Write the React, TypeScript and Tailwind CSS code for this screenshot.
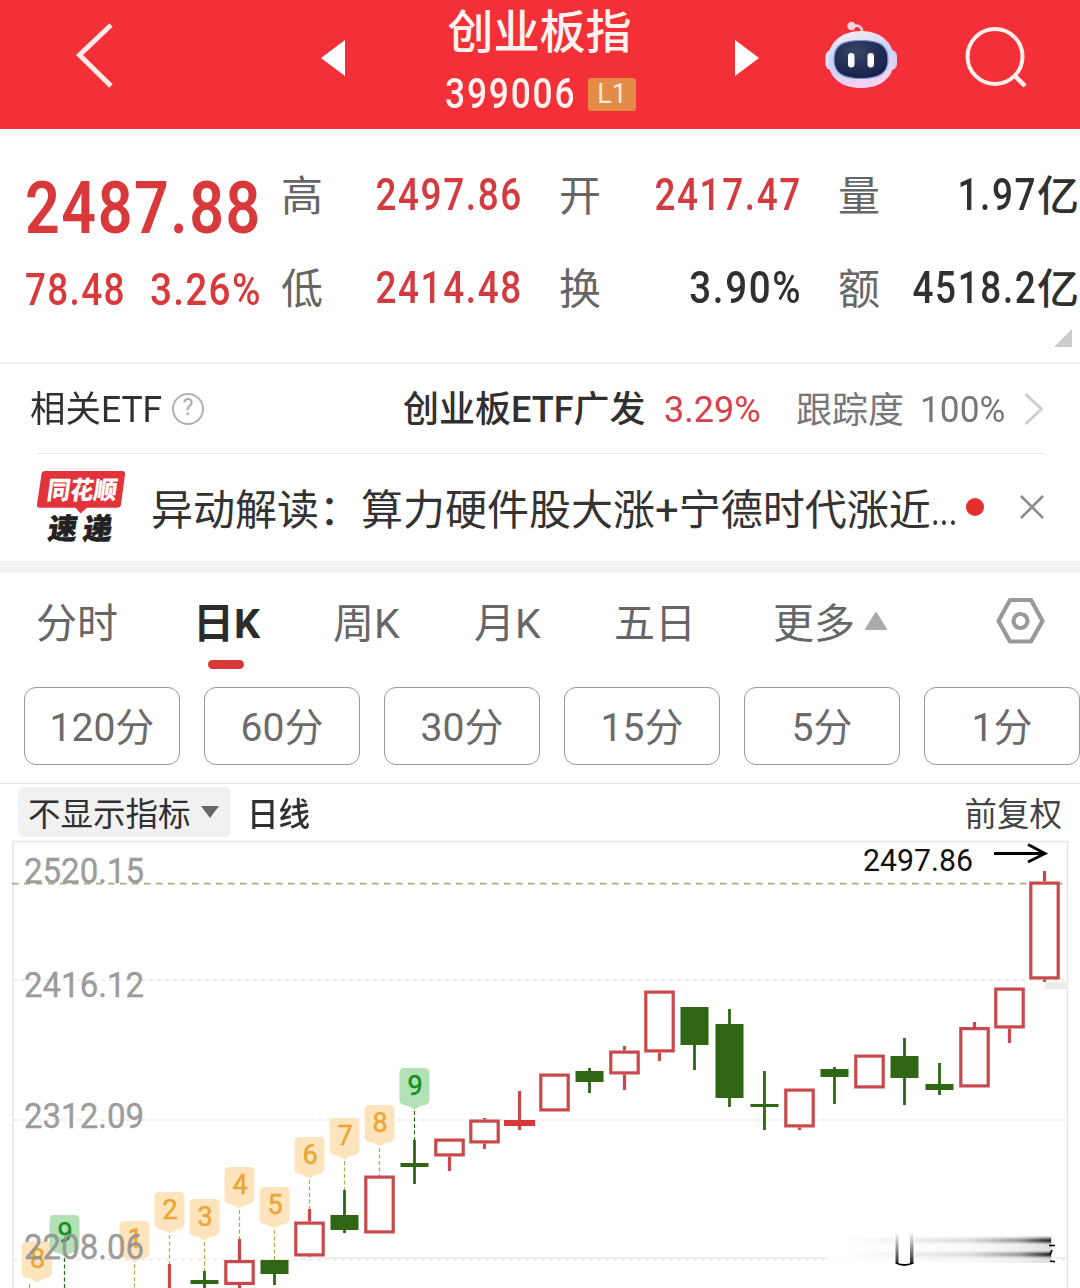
import { clsx } from 'clsx';

const RED = '#c9494b';
const GREEN = '#2f6614';

type Candle = {
  x: number;
  kind: 'up' | 'down' | 'flat';
  top: number;
  bottom: number;
  high?: number;
  low?: number;
};

const candles: Candle[] = [
  { x: 169.5, kind: 'up', top: 1300, bottom: 1310, high: 1264 },
  { x: 204.5, kind: 'down', top: 1280, bottom: 1284, high: 1271, low: 1290 },
  { x: 239.5, kind: 'up', top: 1260, bottom: 1285, high: 1239, low: 1290 },
  { x: 274.5, kind: 'down', top: 1260, bottom: 1274, low: 1285 },
  { x: 309.5, kind: 'up', top: 1221.5, bottom: 1256.5, high: 1209, low: 1257 },
  { x: 344.5, kind: 'down', top: 1215, bottom: 1230, high: 1190, low: 1233 },
  { x: 379.5, kind: 'up', top: 1175.5, bottom: 1233.5 },
  { x: 414.5, kind: 'down', top: 1163, bottom: 1167, high: 1140, low: 1184 },
  { x: 449.5, kind: 'up', top: 1138.5, bottom: 1156.5, low: 1171 },
  { x: 484.5, kind: 'up', top: 1119.5, bottom: 1143.5, high: 1118, low: 1149 },
  { x: 519.5, kind: 'flat', top: 1120, bottom: 1126, high: 1091, low: 1130 },
  { x: 554.5, kind: 'up', top: 1073.5, bottom: 1111.5 },
  { x: 589.5, kind: 'down', top: 1071, bottom: 1082, high: 1068, low: 1093 },
  { x: 624.5, kind: 'up', top: 1050.5, bottom: 1074.5, high: 1046, low: 1090 },
  { x: 659.5, kind: 'up', top: 990.5, bottom: 1052.5, low: 1061 },
  { x: 694.5, kind: 'down', top: 1007, bottom: 1045, low: 1070 },
  { x: 729.5, kind: 'down', top: 1024, bottom: 1098, high: 1009, low: 1107 },
  { x: 764.5, kind: 'down', top: 1104, bottom: 1107, high: 1071, low: 1130 },
  { x: 799.5, kind: 'up', top: 1088.5, bottom: 1127.5, low: 1130 },
  { x: 834.5, kind: 'down', top: 1069, bottom: 1077, high: 1067, low: 1104 },
  { x: 869.5, kind: 'up', top: 1054.5, bottom: 1088.5 },
  { x: 904.5, kind: 'down', top: 1056, bottom: 1078, high: 1038, low: 1105 },
  { x: 939.5, kind: 'down', top: 1084, bottom: 1090, high: 1063, low: 1095 },
  { x: 974.5, kind: 'up', top: 1027, bottom: 1087.5, high: 1022 },
  { x: 1009.5, kind: 'up', top: 987.5, bottom: 1028.5, low: 1043 },
  { x: 1044.5, kind: 'up', top: 881.5, bottom: 979.5, high: 871, low: 982 },
];

// y = top of the tag, end = where its dashed leader stops
const tags = [
  { n: '8', x: 37, y: 1241, end: 1290 },
  { n: '9', x: 64.5, y: 1215, end: 1290 },
  { n: '1', x: 134.5, y: 1221, end: 1290 },
  { n: '2', x: 169.5, y: 1192, end: 1264 },
  { n: '3', x: 204.5, y: 1199, end: 1271 },
  { n: '4', x: 239.5, y: 1167, end: 1239 },
  { n: '5', x: 274.5, y: 1187, end: 1260 },
  { n: '6', x: 309.5, y: 1137, end: 1209 },
  { n: '7', x: 344.5, y: 1118, end: 1190 },
  { n: '8', x: 379.5, y: 1105, end: 1176 },
  { n: '9', x: 414.5, y: 1068, end: 1140 },
];

const axis = [
  { label: '2520.15', y: 883 },
  { label: '2416.12', y: 997 },
  { label: '2312.09', y: 1128 },
  { label: '2208.06', y: 1259 },
];

function CandleMark({ x, kind, top, bottom, high, low }: Candle) {
  if (kind === 'down') {
    return (
      <g fill={GREEN}>
        <rect x={x - 1.4} y={high ?? top} width={2.8} height={(low ?? bottom) - (high ?? top)} />
        <rect x={x - 14} y={top} width={28} height={bottom - top} />
      </g>
    );
  }
  if (kind === 'flat') {
    return (
      <g fill="#d8383a">
        <rect x={x - 1.6} y={high} width={3.2} height={low! - high!} fill={RED} />
        <rect x={x - 15.5} y={top} width={31} height={bottom - top} />
      </g>
    );
  }
  return (
    <g fill={RED}>
      {high && <rect x={x - 1.6} y={high} width={3.2} height={top - high} />}
      {low && <rect x={x - 1.6} y={bottom} width={3.2} height={low - bottom} />}
      <rect x={x - 13.7} y={top + 1.6} width={27.4} height={bottom - top - 3.2} fill="#fff" stroke={RED} strokeWidth={3.2} />
    </g>
  );
}

function Tag({ n, x, y, end }: (typeof tags)[number]) {
  const green = n === '9';
  const lineX = x === 37 ? 29.5 : x;
  return (
    <g>
      <line x1={lineX} x2={lineX} y1={y + 43} y2={end} stroke={green ? '#2f6614' : '#a9ab4c'} strokeWidth={1.2} strokeDasharray="4 2.5" />
      <path
        d={`M${x - 10} ${y}h20q5 0 5 5v26q0 4-3 5.500l-7 2l-5 3l-5-3l-7-2q-3-1.500-3-5.500v-26q0-5 5-5z`}
        fill={green ? '#b3e0b5' : '#fde4bd'}
      />
      <text x={x + 0.5} y={y + 26.5} textAnchor="middle" fontSize={27} stroke={green ? '#12901c' : '#eaa736'} strokeWidth={0.5} fill={green ? '#12901c' : '#eaa736'}>
        {n}
      </text>
    </g>
  );
}

function Chart() {
  return (
    <svg className="block h-[448px] w-[1080px]" viewBox="0 840 1080 448" fontFamily="Roboto, sans-serif">
      <defs>
        <linearGradient id="streak">
          <stop offset="0" stopColor="#000" stopOpacity="0" />
          <stop offset="0.6" stopColor="#000" stopOpacity="0.13" />
          <stop offset="0.85" stopColor="#000" stopOpacity="0.4" />
          <stop offset="1" stopColor="#000" stopOpacity="0.9" />
        </linearGradient>
        <linearGradient id="drip" x1="0" y1="0" x2="0" y2="1">
          <stop offset="0" stopColor="#000" stopOpacity="0" />
          <stop offset="1" stopColor="#000" stopOpacity="0.85" />
        </linearGradient>
        <filter id="soft" x="-5%" y="-50%" width="110%" height="200%">
          <feGaussianBlur stdDeviation="0.4 1.3" />
        </filter>
      </defs>

      {/* frame and grid */}
      <path d="M13 1288V841.500H1067.500V1288" fill="none" stroke="#e6e6e6" strokeWidth={1.6} />
      <g stroke="#e6e6e6" strokeWidth={1.4} strokeDasharray="4 4">
        <line x1="13" x2="1067" y1="980" y2="980" />
        <line x1="13" x2="1067" y1="1120" y2="1120" />
        <line x1="13" x2="1067" y1="1259.500" y2="1259.500" />
      </g>
      <line x1="300" x2="1067" y1="1257.800" y2="1257.800" stroke="#ececec" strokeWidth={1.4} />
      <line x1="12" x2="1067" y1="883.700" y2="883.700" stroke="#b3a97a" strokeWidth={1.8} strokeDasharray="6.500 5.500" />
      <rect x="1045" y="982" width="23" height="7" fill="#ececec" />

      {tags.map((t) => (
        <Tag key={t.x} {...t} />
      ))}
      {candles.map((c) => (
        <CandleMark key={c.x} {...c} />
      ))}

      {axis.map((a) => (
        <text key={a.label} x="24" y={a.y} fontSize={35} fill="#8f8f8f" fillOpacity={0.9} stroke="#999" strokeWidth={0.4} textLength={120} lengthAdjust="spacingAndGlyphs">
          {a.label}
        </text>
      ))}

      <text x="863" y="871" fontSize={31} fill="#111" textLength={110} lengthAdjust="spacingAndGlyphs">
        2497.86
      </text>
      <path d="M994 853.500H1044M1028 844.500L1045 853.500L1028 862" fill="none" stroke="#000" strokeWidth={2.8} />

      {/* worn-off watermark */}
      <rect x="828" y="1236" width="228" height="28" fill="#fff" opacity={0.8} />
      <rect x="828" y="1236" width="224" height="27" fill="url(#streak)" opacity={0.15} />
      <g filter="url(#soft)">
        <rect x="850" y="1238.500" width="201" height="4" fill="url(#streak)" />
        <rect x="850" y="1252.500" width="201" height="4" fill="url(#streak)" />
      </g>
      <rect x="894" y="1234" width="21" height="31" fill="#fff" />
      <rect x="895.500" y="1232" width="3" height="32" fill="url(#drip)" />
      <rect x="910" y="1232" width="3.500" height="32" fill="url(#drip)" />
      <path d="M896 1263q8 4 17 0" fill="none" stroke="#000" strokeWidth={1.8} />
      <path d="M1049 1245.500h6M1052 1250l-2 5M1050 1261l5 .8" fill="none" stroke="#000" strokeWidth={1.6} />
    </svg>
  );
}

function Robot() {
  return (
    <svg className="h-[68px] w-[74px]" viewBox="824 21 74 68">
      <defs>
        <linearGradient id="shell" x1="0" y1="0" x2="0.3" y2="1">
          <stop offset="0" stopColor="#fff1f3" />
          <stop offset="0.5" stopColor="#c9d4f6" />
          <stop offset="1" stopColor="#f3d3f2" />
        </linearGradient>
        <radialGradient id="visor" cx="0.4" cy="0.3" r="0.7">
          <stop offset="0" stopColor="#3a4566" />
          <stop offset="1" stopColor="#17204a" />
        </radialGradient>
      </defs>
      <path d="M852 26q11-2 10 7" fill="none" stroke="#f8c9d4" strokeWidth={2.6} />
      <circle cx="851.500" cy="26" r="4.200" fill="#fbd3da" />
      <rect x="825.500" y="50" width="12" height="20" rx="6" fill="#f3e4f5" />
      <rect x="885" y="50" width="12" height="20" rx="6" fill="#d9cdf8" />
      <path d="M861 31c20 0 33 12 33 29c0 18-14 28-33 28s-33-10-33-28c0-17 13-29 33-29z" fill="url(#shell)" />
      <path d="M861 40.500c18 0 27 4 27 19c0 14-9 19-27 19s-27-5-27-19c0-15 9-19 27-19z" fill="url(#visor)" stroke="#7d92dd" strokeWidth={1.2} />
      <rect x="848" y="53" width="6.500" height="14.500" rx="3.200" fill="#fff" />
      <rect x="867.500" y="53" width="6.500" height="14.500" rx="3.200" fill="#fff" />
    </svg>
  );
}

function Header() {
  return (
    <header className="flex h-[129px] items-start bg-[#f32f38] text-[#fff3f0]">
      <svg className="mt-[22px] ml-[75px] h-[68px] w-10" viewBox="75 22 40 68">
        <path d="M111 25L79.500 55L111 86" fill="none" stroke="#ffebe6" strokeWidth={5} />
      </svg>
      <svg className="mt-10 ml-[206px] h-9 w-6" viewBox="0 0 24 36">
        <path d="M24 0V36L0 18z" fill="#fff" />
      </svg>
      <div className="ml-[95px] flex w-[200px] flex-col items-center">
        <h1 className="mt-[5px] -ml-px text-[46px] leading-[54px] font-medium whitespace-nowrap">创业板指</h1>
        <div className="mt-[14px] flex h-[42px] w-[200px] items-center pl-[5px]">
          <span className="w-[143px] shrink-0 text-[42px] leading-[42px] font-medium">
            <span className="inline-block origin-left scale-x-[0.84] tracking-[2.2px]">399006</span>
          </span>
          <span className="flex h-[33px] w-12 items-center justify-center rounded-[3px] bg-[#e28c47] text-[27px] text-[#ffe9d6]">L1</span>
        </div>
      </div>
      <svg className="mt-10 ml-[95px] h-9 w-6" viewBox="0 0 24 36">
        <path d="M0 0V36L24 18z" fill="#fff" />
      </svg>
      <div className="mt-[21px] ml-[65px]">
        <Robot />
      </div>
      <svg className="mt-[25px] ml-[66px] h-16 w-[66px]" viewBox="964 25 66 64">
        <circle cx="995" cy="56.500" r="27.500" fill="none" stroke="#fff0ec" strokeWidth={4} />
        <path d="M1014 75L1025 86" stroke="#fff0ec" strokeWidth={4.500} />
      </svg>
    </header>
  );
}

const quotes = [
  [
    { label: '高', value: '2497.86', red: true },
    { label: '低', value: '2414.48', red: true },
  ],
  [
    { label: '开', value: '2417.47', red: true },
    { label: '换', value: '3.90%', red: false },
  ],
  [
    { label: '量', value: '1.97', unit: '亿', red: false },
    { label: '额', value: '4518.2', unit: '亿', red: false },
  ],
];

function Quotes() {
  return (
    <section className="flex h-[233px] pl-[25px]">
      <div className="w-[256px] shrink-0 pt-10 font-medium text-[#d8393b]">
        <div className="h-[76px] text-[73px] leading-[78px]">
          <span className="inline-block origin-left scale-x-[0.835] font-semibold tracking-[1.8px]">2487.88</span>
        </div>
        <div className="mt-[22px] flex h-[46px] text-[45px] leading-[46px]">
          <span className="w-[125px]">
            <span className="inline-block origin-left scale-x-[0.82] tracking-[1.6px]">78.48</span>
          </span>
          <span className="inline-block origin-left scale-x-[0.86] tracking-[1.5px]">3.26%</span>
        </div>
      </div>
      {quotes.map((col, i) => (
        <div key={i} className={clsx('shrink-0 pt-[43px]', i === 0 && 'w-[278px]', i === 1 && 'w-[279px]', i === 2 && 'w-[241px]')}>
          {col.map((q) => (
            <div key={q.label} className="mb-[47px] flex h-[46px] items-center leading-[46px]">
              <span className="pt-1 text-[42px] text-[#666]">{q.label}</span>
              <span
                className={clsx(
                  'flex flex-1 items-center justify-end text-[45px] font-medium',
                  i < 2 && 'pr-[36px]',
                  q.red ? 'text-[#d23c40]' : 'text-[#303030]',
                )}
              >
                <span className={clsx('inline-block origin-right tracking-[2px]', q.value.endsWith('%') ? 'scale-x-[0.855]' : 'scale-x-[0.82]')}>{q.value}</span>
                {'unit' in q && <span className="pt-[3px] text-[42px]">{q.unit}</span>}
              </span>
            </div>
          ))}
          {i === 2 && (
            <svg className="-mt-[29px] ml-[216px] h-[18px] w-[18px]" viewBox="0 0 18 18">
              <path d="M18 0V18H0z" fill="#ccc" />
            </svg>
          )}
        </div>
      ))}
    </section>
  );
}

function EtfRow() {
  return (
    <section className="flex h-[91px] items-center border-t-2 border-[#efefef] pl-[30px] text-[36px] whitespace-nowrap text-[#303030]">
      <span className="w-[142px] pt-[3px]">
        <span className="inline-block origin-left scale-x-[0.985]">相关ETF</span>
      </span>
      <span className="flex h-[32px] w-[32px] items-center justify-center rounded-full border-2 border-[#b0b0b0] text-[23px] text-[#aaa]">?</span>
      <span className="ml-[199px] w-[261px] pt-[3px] font-medium">创业板ETF广发</span>
      <span className="w-[132px] pt-[3px] text-[#d5414f]">3.29%</span>
      <span className="w-[124px] pt-1 text-[#777]">跟踪度</span>
      <span className="w-[104px] pt-[3px] text-[#777]">
        <span className="inline-block origin-left scale-x-[0.98]">100%</span>
      </span>
      <svg className="h-8 w-5" viewBox="0 0 20 32">
        <path d="M1.500 1L17.500 16L1.500 31" fill="none" stroke="#ccc" strokeWidth={2.800} />
      </svg>
    </section>
  );
}

function NewsRow() {
  return (
    <section className="flex h-[108px] items-center">
      <div className="ml-[37px] h-[76px] w-[114px] shrink-0">
        <svg className="h-[84px] w-[90px] overflow-visible" viewBox="37 470 90 84" fontFamily="'Noto Sans CJK SC', sans-serif" fontWeight={900}>
          <path d="M45 471H122q3.500 0 3 3.500L121 504.500q-.5 3.200-4 3.200H87L80.500 513.500L75.500 507.700H40q-3.500 0-3-3.200L41.500 474q.5-3 3.500-3z" fill="#e0343a" />
          <g transform="translate(46 499) skewX(-8)">
            <text fontSize={25} fill="#fff" textLength={70} lengthAdjust="spacingAndGlyphs">
              同花顺
            </text>
          </g>
          <g transform="translate(47 538.500) skewX(-8)" fill="#222" stroke="#222" strokeWidth={0.600}>
            <text fontSize={29}>速</text>
            <text x="35" fontSize={29}>
              递
            </text>
          </g>
        </svg>
      </div>
      <p className="w-[813px] pt-[5px] text-[42px] leading-[56px] whitespace-nowrap text-[#333]">
        异动解读：算力硬件股大涨+宁德时代涨近<span className="inline-block origin-left scale-x-[0.8]">...</span>
      </p>
      <span className="mb-[3px] ml-[2px] h-[18px] w-[18px] shrink-0 rounded-full bg-[#e3302f]" />
      <svg className="mb-[3px] ml-[36px] h-6 w-6 shrink-0" viewBox="0 0 24 24">
        <path d="M1 1L23 23M23 1L1 23" stroke="#8c8c8c" strokeWidth={2.600} />
      </svg>
    </section>
  );
}

const tabs = [
  { label: '分时', cell: 'w-[157px]' },
  { label: '日K', cell: 'w-[140px]', active: true },
  { label: '周K', cell: 'w-[141px]' },
  { label: '月K', cell: 'w-[140px]' },
  { label: '五日', cell: 'w-[159px]' },
];

function Tabs() {
  return (
    <nav className="flex h-[114px] pt-[23px] pl-[36px] text-[41px] leading-[56px] whitespace-nowrap text-[#666]">
      {tabs.map((t) => (
        <div key={t.label} className={t.cell}>
          <div className={clsx(t.active && 'font-bold text-[#2b2b2b]')}>{t.label}</div>
          {t.active && <div className="mt-2 ml-[15px] h-[9px] w-9 rounded-full bg-[#d8383a]" />}
        </div>
      ))}
      <div className="flex w-[222px]">
        更多
        <svg className="mt-[15px] ml-[9px] h-5 w-6" viewBox="0 0 24 20">
          <path d="M12 2L22 18H2z" fill="#ababab" stroke="#ababab" strokeWidth={2} strokeLinejoin="round" />
        </svg>
      </div>
      <svg className="mt-px h-[48px] w-[50px]" viewBox="995 597 50 48">
        <path d="M1010 600H1031L1042.500 621L1031 641.500H1010L998.500 621z" fill="none" stroke="#999" strokeWidth={4.200} strokeLinejoin="round" />
        <circle cx="1020.500" cy="621" r="7" fill="none" stroke="#999" strokeWidth={4.200} />
      </svg>
    </nav>
  );
}

export default function App() {
  return (
    <div className="h-[1288px] w-[1080px] overflow-hidden bg-white font-['Roboto','Noto_Sans_CJK_SC',sans-serif]">
      <Header />
      <Quotes />
      <EtfRow />
      <div className="mr-9 ml-[37px] h-px bg-[#e6e6e6]" />
      <NewsRow />
      <div className="-mt-px h-3 bg-[#f4f4f4]" />
      <Tabs />
      <div className="flex gap-6 pl-6">
        {['120分', '60分', '30分', '15分', '5分', '1分'].map((p) => (
          <button key={p} className="flex h-[78px] w-[156px] shrink-0 items-center justify-center rounded-xl border border-[#999] pt-1 text-[39px] text-[#6b6b6b]">
            <span className="whitespace-nowrap">{p}</span>
          </button>
        ))}
      </div>
      <div className="mt-[18px] flex h-[57px] items-center border-t border-[#e3e3e3] pr-[18px] pl-[18px] text-[32.500px] leading-[48px] text-[#303030]">
        <div className="flex h-[50px] w-[213px] items-center rounded-md bg-[#f1f1f1] pl-[10px]">
          <span className="pt-[5px]">不显示指标</span>
          <svg className="ml-[9px] h-3.5 w-5" viewBox="0 0 20 14">
            <path d="M1 1H19L10 13z" fill="#666" />
          </svg>
        </div>
        <span className="ml-4 pt-[5px] font-medium">
          <span className="inline-block origin-left scale-x-[0.97]">日线</span>
        </span>
        <span className="ml-auto pt-[5px] text-[#444]">前复权</span>
      </div>
      <Chart />
    </div>
  );
}
